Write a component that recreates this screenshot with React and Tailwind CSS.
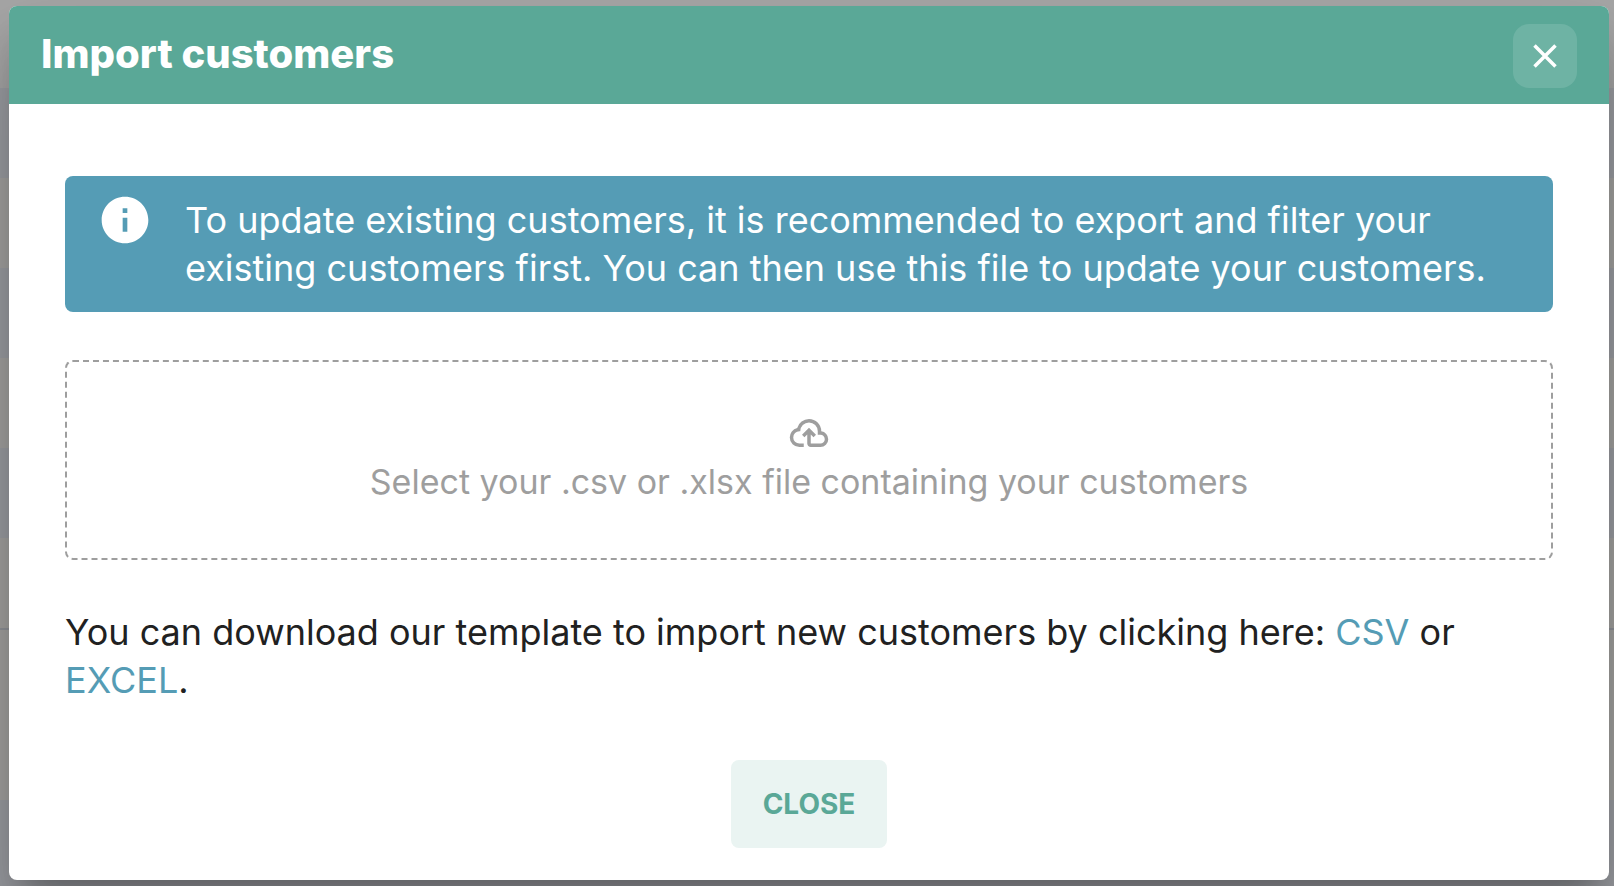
import React, { useState } from 'react';

// rows of the list that stay visible behind the dialog
const ROWS = [
  'h-[88px] bg-[#a5a5a5]',
  'h-[90px] bg-[#9b9da2]',
  'h-[90px] bg-[#a3a2a0]',
  'h-[90px] bg-[#9b9da2]',
  'h-[90px] bg-[#a3a2a0]',
  'h-[90px] bg-[#9b9da2]',
  'h-[92px] bg-[#a3a2a0] border-b-2 border-[#8f9298]',
  'h-[170px] bg-[#a3a2a0]',
  'h-[86px] bg-[#9b9da2]',
];

const CloseIcon = () => (
  <svg className="h-8 w-8" viewBox="0 0 32 32" fill="none" stroke="currentColor" strokeWidth="3.5" aria-hidden="true">
    <path d="M5.5 5.5 26.5 26.5M26.5 5.5 5.5 26.5" />
  </svg>
);

const InfoIcon = () => (
  <svg className="h-14 w-14 shrink-0" viewBox="0 0 24 24" fill="currentColor" aria-hidden="true">
    <path d="M12 2C6.48 2 2 6.48 2 12s4.48 10 10 10 10-4.48 10-10S17.52 2 12 2zm1 15h-2v-6h2v6zm0-8h-2V7h2v2z" />
  </svg>
);

const UploadIcon = () => (
  <svg className="h-[42px] w-[42px]" viewBox="0 0 24 24" fill="currentColor" aria-hidden="true">
    <path d="M6.5 20q-2.28 0-3.89-1.57Q1 16.85 1 14.58q0-1.95 1.17-3.48 1.18-1.53 3.08-1.95.63-2.3 2.5-3.72Q9.63 4 12 4q2.93 0 4.96 2.04Q19 8.07 19 11q1.73.2 2.86 1.5Q23 13.78 23 15.5q0 1.88-1.31 3.19Q20.38 20 18.5 20H13q-.82 0-1.41-.59Q11 18.83 11 18v-5.15L9.4 14.4 8 13l4-4 4 4-1.4 1.4-1.6-1.55V18h5.5q1.05 0 1.77-.73.73-.72.73-1.77t-.73-1.77Q19.55 13 18.5 13H17v-2q0-2.07-1.46-3.54Q14.08 6 12 6T8.46 7.46Q7 8.93 7 11h-.5q-1.45 0-2.48 1.03Q3 13.05 3 14.5q0 1.45 1.02 2.5Q5.05 18 6.5 18H9v2z" />
  </svg>
);

const App = () => {
  const [open, setOpen] = useState(true);
  const [fileName, setFileName] = useState('');

  return (
    <div className="relative min-h-screen overflow-hidden font-['Inter',sans-serif]">
      <div className="absolute inset-0" aria-hidden="true">
        {ROWS.map((row, i) => (
          <div key={i} className={row} />
        ))}
      </div>

      {open && (
        <div
          role="dialog"
          aria-labelledby="import-title"
          className="relative mt-1.5 mr-[5px] ml-[9px] overflow-hidden rounded-lg bg-white shadow-[0_22px_30px_-14px_rgba(0,0,0,0.25),0_48px_76px_6px_rgba(0,0,0,0.22)]"
        >
          <header className="flex items-start justify-between bg-[#5aa897] px-8 pt-[18px] pb-4 text-white">
            <h1 id="import-title" className="text-[40px] leading-[60px] font-extrabold">
              Import customers
            </h1>
            <button
              type="button"
              aria-label="Close dialog"
              onClick={() => setOpen(false)}
              className="flex h-16 w-16 items-center justify-center rounded-2xl bg-[#6eb3a4] hover:bg-[#7fbcaf]"
            >
              <CloseIcon />
            </button>
          </header>

          <div className="px-14 pt-[72px] pb-8 text-[36px] leading-[48px]">
            <div className="flex gap-8 rounded-lg bg-[#559cb5] px-8 py-4 text-white">
              <InfoIcon />
              <p className="py-1">
                To update existing customers, it is recommended to export and filter your existing customers first. You
                can then use this file to update your customers.
              </p>
            </div>

            <label className="mt-12 flex cursor-pointer flex-col items-center rounded-lg border-2 border-dashed border-[#9e9e9e] px-8 pt-[50px] pb-[52px] text-[34px] leading-[48px] text-[#9e9e9e]">
              <UploadIcon />
              <span className="pt-1">{fileName || 'Select your .csv or .xlsx file containing your customers'}</span>
              <input
                type="file"
                accept=".csv,.xlsx"
                className="sr-only"
                onChange={(e) => setFileName(e.target.files[0]?.name || '')}
              />
            </label>

            <p className="mt-12 text-[#212121]">
              You can download our template to import new customers by clicking here:{' '}
              <a href="#csv" className="text-[#559cb5] hover:underline">CSV</a> or{' '}
              <a href="#excel" className="text-[#559cb5] hover:underline">EXCEL</a>.
            </p>

            <div className="mt-14 flex justify-center">
              <button
                type="button"
                onClick={() => setOpen(false)}
                className="rounded-lg bg-[#eaf4f2] px-8 py-5 text-[28px] leading-[48px] font-bold text-[#5aa897] hover:bg-[#dceeea]"
              >
                CLOSE
              </button>
            </div>
          </div>
        </div>
      )}
    </div>
  );
};

export default App;
